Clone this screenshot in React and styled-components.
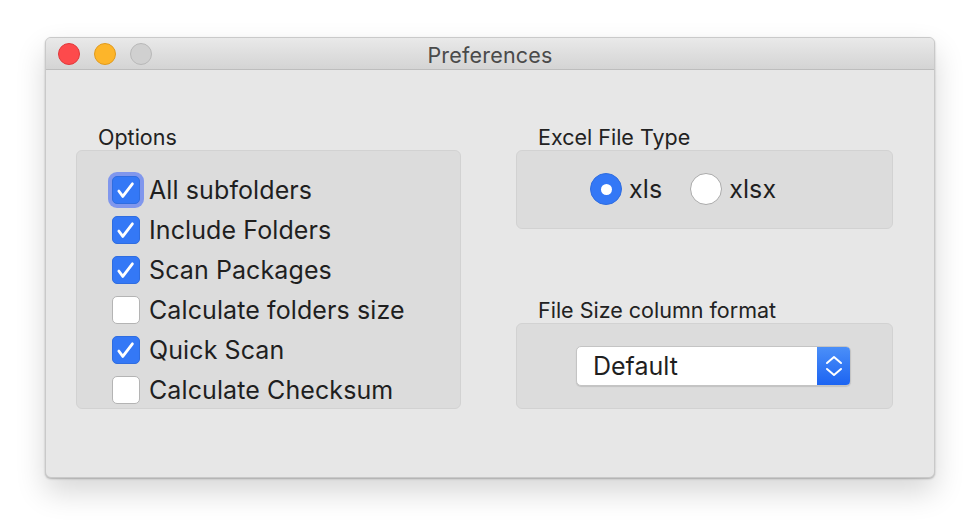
import React from "react";
import styled, { createGlobalStyle } from "styled-components";

const GlobalStyle = createGlobalStyle`
  html, body {
    margin: 0;
    padding: 0;
    background: #ffffff;
  }
  body {
    font-family: "Inter", "Noto Sans", "Liberation Sans", sans-serif;
    color: #1f1f1f;
  }
`;

export default function App() {
  const options = [
    { label: "All subfolders", checked: true, focused: true },
    { label: "Include Folders", checked: true },
    { label: "Scan Packages", checked: true },
    { label: "Calculate folders size", checked: false },
    { label: "Quick Scan", checked: true },
    { label: "Calculate Checksum", checked: false },
  ];

  return (
    <Page>
      <GlobalStyle />
      <Window>
        <TitleBar>
          <Lights>
            <Light color="#fd4a4c" border="#e0383b" />
            <Light color="#fdb52a" border="#e09a1d" />
            <Light color="#d0d0d0" border="#b8b8b8" />
          </Lights>
          <Title>Preferences</Title>
        </TitleBar>
        <Content>
          <Section>
            <GroupLabel>Options</GroupLabel>
            <Group height={259}>
              <CheckList>
                {options.map((opt, i) => (
                  <CheckRow key={i}>
                    <CheckBox checked={opt.checked} focused={opt.focused}>
                      {opt.checked && (
                        <svg width="26" height="26" viewBox="0 0 26 26">
                          <path
                            d="M5.8 14 L9.8 19.4 L19.4 6.8"
                            fill="none"
                            stroke="#fff"
                            strokeWidth="2.8"
                            strokeLinecap="round"
                            strokeLinejoin="round"
                          />
                        </svg>
                      )}
                    </CheckBox>
                    <RowText>{opt.label}</RowText>
                  </CheckRow>
                ))}
              </CheckList>
            </Group>
          </Section>
          <RightColumn>
            <Section>
              <GroupLabel>Excel File Type</GroupLabel>
              <Group height={79}>
                <RadioRow>
                  <RadioItem>
                    <Radio selected />
                    <RowText>xls</RowText>
                  </RadioItem>
                  <RadioItem>
                    <Radio />
                    <RowText>xlsx</RowText>
                  </RadioItem>
                </RadioRow>
              </Group>
            </Section>
            <Section>
              <GroupLabel>File Size column format</GroupLabel>
              <Group height={86}>
                <SelectWrap>
                  <Select>
                    <SelectText>Default</SelectText>
                    <Stepper>
                      <svg width="18" height="24" viewBox="0 0 18 24">
                        <path
                          d="M2 9 L9 3 L16 9 M2 15 L9 21 L16 15"
                          fill="none"
                          stroke="#fff"
                          strokeWidth="2"
                          strokeLinecap="round"
                          strokeLinejoin="round"
                        />
                      </svg>
                    </Stepper>
                  </Select>
                </SelectWrap>
              </Group>
            </Section>
          </RightColumn>
        </Content>
      </Window>
    </Page>
  );
}

const Page = styled.div`
  padding: 37px 45px 54px;
  width: 980px;
  box-sizing: border-box;
`;

const Window = styled.div`
  width: 890px;
  height: 441px;
  box-sizing: border-box;
  background: #e7e7e7;
  border: 1px solid #c9c9c9;
  border-radius: 6px;
  overflow: hidden;
  box-shadow: 0 14px 30px rgba(0, 0, 0, 0.16), 0 1px 2px rgba(0, 0, 0, 0.25);
  display: flex;
  flex-direction: column;
`;

const TitleBar = styled.div`
  height: 31px;
  flex-shrink: 0;
  position: relative;
  display: flex;
  align-items: center;
  justify-content: center;
  background: linear-gradient(#e9e9e9, #d4d4d4);
  border-bottom: 1px solid #bdbdbd;
`;

const Lights = styled.div`
  position: absolute;
  left: 12px;
  top: 5px;
  display: flex;
  gap: 14px;
`;

const Light = styled.span`
  width: 22px;
  height: 22px;
  border-radius: 50%;
  background: ${(p) => p.color};
  border: 1px solid ${(p) => p.border};
  box-sizing: border-box;
`;

const Title = styled.div`
  font-size: 21.5px;
  color: #4a4a4a;
  margin-top: 2px;
  letter-spacing: 0.2px;
`;

const Content = styled.div`
  flex: 1;
  display: grid;
  grid-template-columns: 385px 377px;
  column-gap: 55px;
  padding: 55px 0 0 30px;
  align-items: start;
`;

const RightColumn = styled.div`
  display: flex;
  flex-direction: column;
  gap: 69px;
`;

const Section = styled.div`
  display: flex;
  flex-direction: column;
`;

const GroupLabel = styled.div`
  font-size: 21.5px;
  line-height: 24px;
  padding-left: 22px;
  margin-bottom: 1px;
  color: #222;
`;

const Group = styled.div`
  height: ${(p) => p.height}px;
  box-sizing: border-box;
  background: #dcdcdc;
  border: 1px solid #d2d2d2;
  border-radius: 6px;
`;

const CheckList = styled.div`
  display: flex;
  flex-direction: column;
  padding: 19px 0 0 35px;
`;

const CheckRow = styled.div`
  height: 40px;
  display: flex;
  align-items: center;
  gap: 9px;
`;

const CheckBox = styled.span`
  width: 28px;
  height: 28px;
  box-sizing: border-box;
  border-radius: 5px;
  display: flex;
  align-items: center;
  justify-content: center;
  background: ${(p) => (p.checked ? "#3478f6" : "#ffffff")};
  border: 1px solid ${(p) => (p.checked ? "#2f6de0" : "#b4b4b4")};
  box-shadow: ${(p) =>
    p.focused ? "0 0 0 4px rgba(112, 139, 240, 0.85)" : "none"};
`;

const RowText = styled.span`
  font-size: 25px;
  color: #1f1f1f;
  letter-spacing: 0.1px;
`;

const RadioRow = styled.div`
  display: flex;
  align-items: center;
  gap: 28px;
  padding: 22px 0 0 73px;
`;

const RadioItem = styled.div`
  display: flex;
  align-items: center;
  gap: 7px;
`;

const Radio = styled.span`
  width: 32px;
  height: 32px;
  box-sizing: border-box;
  border-radius: 50%;
  display: flex;
  align-items: center;
  justify-content: center;
  background: ${(p) => (p.selected ? "#3478f6" : "#ffffff")};
  border: 1px solid ${(p) => (p.selected ? "#2f6de0" : "#aaaaaa")};
  &::after {
    content: "";
    width: 11px;
    height: 11px;
    border-radius: 50%;
    background: #fff;
    display: ${(p) => (p.selected ? "block" : "none")};
  }
`;

const SelectWrap = styled.div`
  padding: 22px 0 0 59px;
`;

const Select = styled.div`
  width: 275px;
  height: 40px;
  box-sizing: border-box;
  display: flex;
  background: #ffffff;
  border-radius: 5px;
  border: 1px solid #c4c4c4;
  box-shadow: 0 1px 1px rgba(0, 0, 0, 0.12);
  overflow: hidden;
`;

const SelectText = styled.div`
  flex: 1;
  display: flex;
  align-items: center;
  padding-left: 16px;
  font-size: 25px;
  color: #1f1f1f;
`;

const Stepper = styled.div`
  width: 33px;
  display: flex;
  align-items: center;
  justify-content: center;
  background: linear-gradient(#4b8ff8, #1c64f2);
`;
